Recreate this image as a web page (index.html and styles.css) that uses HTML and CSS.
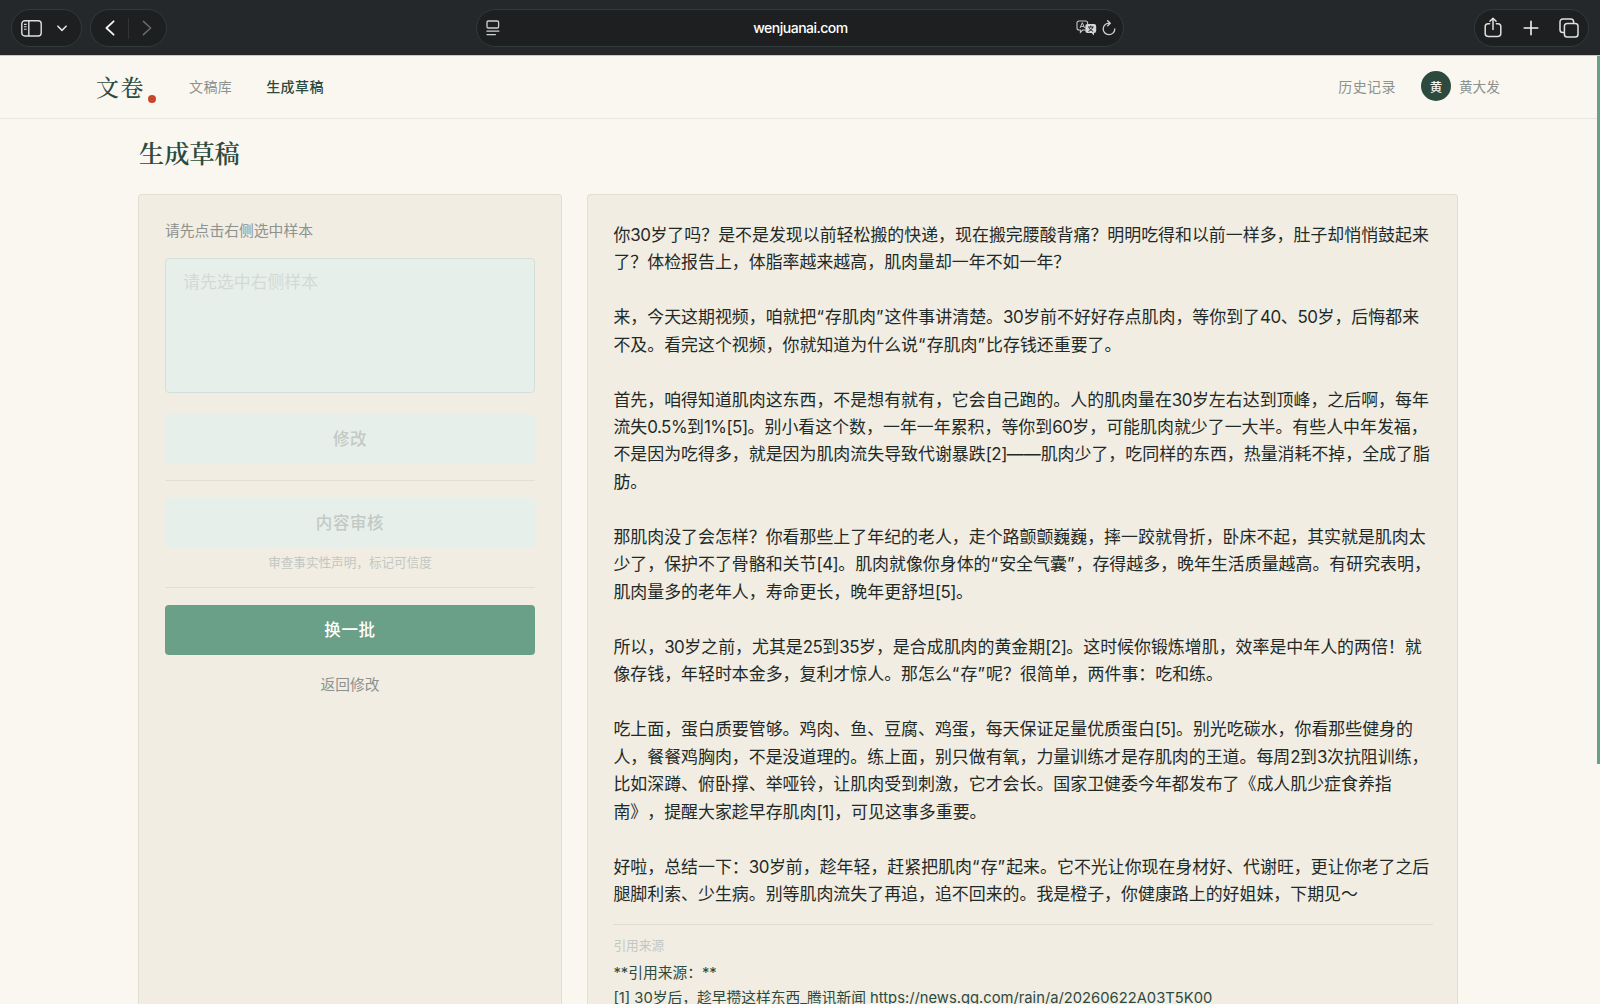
FILE: index.html
```html
<!DOCTYPE html>
<html lang="zh-CN">
<head>
<meta charset="utf-8">
<title>文卷 - 生成草稿</title>
<link rel="stylesheet" href="styles.css">
</head>
<body>
<div class="browser">
  <div class="pill pill-side">
    <svg width="21" height="17" viewBox="0 0 21 17" fill="none" stroke="#dfe1e1" stroke-width="1.4"><rect x=".8" y=".8" width="19.4" height="15.2" rx="3"/><path d="M7.8 1v15"/><path d="M3 4.4h2.6M3 6.8h2.6M3 9.2h2.6" stroke-width="1.1"/></svg>
    <svg width="10" height="7" viewBox="0 0 10 7" fill="none" stroke="#dfe1e1" stroke-width="1.6" stroke-linecap="round" stroke-linejoin="round"><path d="M.9 1.2 5 5.4l4.1-4.2"/></svg>
  </div>
  <div class="pill pill-nav">
    <svg width="10" height="16" viewBox="0 0 10 16" fill="none" stroke="#f2f3f3" stroke-width="1.8" stroke-linecap="round" stroke-linejoin="round"><path d="M8.6 1.3 1.4 8l7.2 6.7"/></svg>
    <span class="pill-divider"></span>
    <svg width="10" height="16" viewBox="0 0 10 16" fill="none" stroke="#66696a" stroke-width="1.6" stroke-linecap="round" stroke-linejoin="round"><path d="m1.4 1.3 7.2 6.7-7.2 6.7"/></svg>
  </div>
  <div class="pill pill-url">
    <svg width="14" height="16" viewBox="0 0 14 16" fill="none" stroke="#cfd1d1" stroke-width="1.3" stroke-linecap="round"><rect x="1" y="1" width="11.6" height="7" rx="1.2"/><path d="M1 11.2h11.8M1 14.6h8.4"/></svg>
    <span class="url">wenjuanai.com</span>
    <div class="url-tools">
      <svg width="21" height="16" viewBox="0 0 21 16" fill="none"><path d="M9.2 10H6.6L4.4 12.3V10H3A2 2 0 0 1 1 8V3a2 2 0 0 1 2-2h6.600a2 2 0 0 1 2 2v1" stroke="#c5c7c7" stroke-width="1.1"/><path d="M4 8 6.300 2.700 8.600 8M4.800 6.400h3" stroke="#c5c7c7"/><path d="M11.500 4h6.500a2.200 2.200 0 0 1 2.200 2.200v4.600A2.200 2.200 0 0 1 18 13v2.400L15.700 13h-4.200a2.200 2.200 0 0 1-2.200-2.200V6.200A2.200 2.200 0 0 1 11.500 4z" fill="#d6d8d8"/><path d="M12 7h5.600M14.800 5.600V7M16.700 7c-.5 2-2 3.500-4.300 4.400M13 7.500c.6 1.800 2 3 4.200 3.900" stroke="#1e1f20"/></svg>
      <svg width="14" height="16" viewBox="0 0 14 16" fill="none" stroke="#cfd1d1" stroke-width="1.3" stroke-linecap="round" stroke-linejoin="round"><path d="M7.600 3.100A5.800 5.800 0 1 0 12.800 9M5.600.8l2.700 2.400-2.600 2.600"/></svg>
    </div>
  </div>
  <div class="pill pill-actions">
    <svg width="18" height="21" viewBox="0 0 18 21" fill="none" stroke="#dfe1e1" stroke-width="1.5" stroke-linecap="round" stroke-linejoin="round"><path d="M5.600 6.800H4a2.800 2.800 0 0 0-2.800 2.800v7A2.800 2.800 0 0 0 4 19.400h10a2.800 2.800 0 0 0 2.800-2.800v-7A2.800 2.800 0 0 0 14 6.800h-1.600M9 12.500V1.400M5.900 4.300 9 1.200l3.100 3.100"/></svg>
    <svg width="16" height="16" viewBox="0 0 16 16" fill="none" stroke="#f2f3f3" stroke-width="1.6" stroke-linecap="round"><path d="M8 1.200v13.600M1.200 8h13.600"/></svg>
    <svg width="20" height="20" viewBox="0 0 20 20" fill="none" stroke="#dfe1e1" stroke-width="1.500"><rect x="5.400" y="5.400" width="13.600" height="13.600" rx="2.800"/><path d="M5.400 14.600H3.800A2.800 2.800 0 0 1 1 11.800v-8A2.800 2.800 0 0 1 3.800 1h8a2.800 2.800 0 0 1 2.800 2.800v1.600"/></svg>
  </div>
</div>
<header class="topbar">
  <div class="brand">文卷<span class="brand-dot"></span></div>
  <nav class="nav"><a class="nav-link">文稿库</a><a class="nav-link nav-link-active">生成草稿</a></nav>
  <div class="account"><a class="nav-link">历史记录</a><span class="avatar">黄</span><span class="user">黄大发</span></div>
</header>
<main class="page">
  <h1 class="title">生成草稿</h1>
  <div class="columns">
    <section class="card side">
      <p class="label">请先点击右侧选中样本</p>
      <div class="input">请先选中右侧样本</div>
      <button class="btn btn-off">修改</button>
      <div class="rule rule-first"></div>
      <button class="btn btn-off">内容审核</button>
      <p class="hint">审查事实性声明，标记可信度</p>
      <div class="rule rule-second"></div>
      <button class="btn btn-main">换一批</button>
      <a class="back">返回修改</a>
    </section>
    <section class="card article">
      <p class="para">你<span class="n">30</span>岁了吗？是不是发现以前轻松搬的快递，现在搬完腰酸背痛？明明吃得和以前一样多，肚子却悄悄鼓起来<br>了？体检报告上，体脂率越来越高，肌肉量却一年不如一年？</p>
      <p class="para">来，今天这期视频，咱就把<span class="q">“</span>存肌肉<span class="q">”</span>这件事讲清楚。<span class="n">30</span>岁前不好好存点肌肉，等你到了<span class="n">40</span>、<span class="n">50</span>岁，后悔都来<br>不及。看完这个视频，你就知道为什么说<span class="q">“</span>存肌肉<span class="q">”</span>比存钱还重要了。</p>
      <p class="para">首先，咱得知道肌肉这东西，不是想有就有，它会自己跑的。人的肌肉量在<span class="n">30</span>岁左右达到顶峰，之后啊，每年<br>流失<span class="n">0.5%</span>到<span class="n">1%[5]</span>。别小看这个数，一年一年累积，等你到<span class="n">60</span>岁，可能肌肉就少了一大半。有些人中年发福，<br>不是因为吃得多，就是因为肌肉流失导致代谢暴跌<span class="n">[2]</span>——肌肉少了，吃同样的东西，热量消耗不掉，全成了脂<br>肪。</p>
      <p class="para">那肌肉没了会怎样？你看那些上了年纪的老人，走个路颤颤巍巍，摔一跤就骨折，卧床不起，其实就是肌肉太<br>少了，保护不了骨骼和关节<span class="n">[4]</span>。肌肉就像你身体的<span class="q">“</span>安全气囊<span class="q">”</span>，存得越多，晚年生活质量越高。有研究表明，<br>肌肉量多的老年人，寿命更长，晚年更舒坦<span class="n">[5]</span>。</p>
      <p class="para">所以，<span class="n">30</span>岁之前，尤其是<span class="n">25</span>到<span class="n">35</span>岁，是合成肌肉的黄金期<span class="n">[2]</span>。这时候你锻炼增肌，效率是中年人的两倍！就<br>像存钱，年轻时本金多，复利才惊人。那怎么<span class="q">“</span>存<span class="q">”</span>呢？很简单，两件事：吃和练。</p>
      <p class="para">吃上面，蛋白质要管够。鸡肉、鱼、豆腐、鸡蛋，每天保证足量优质蛋白<span class="n">[5]</span>。别光吃碳水，你看那些健身的<br>人，餐餐鸡胸肉，不是没道理的。练上面，别只做有氧，力量训练才是存肌肉的王道。每周<span class="n">2</span>到<span class="n">3</span>次抗阻训练，<br>比如深蹲、俯卧撑、举哑铃，让肌肉受到刺激，它才会长。国家卫健委今年都发布了《成人肌少症食养指<br>南》，提醒大家趁早存肌肉<span class="n">[1]</span>，可见这事多重要。</p>
      <p class="para">好啦，总结一下：<span class="n">30</span>岁前，趁年轻，赶紧把肌肉<span class="q">“</span>存<span class="q">”</span>起来。它不光让你现在身材好、代谢旺，更让你老了之后<br>腿脚利索、少生病。别等肌肉流失了再追，追不回来的。我是橙子，你健康路上的好姐妹，下期见～</p>
      <div class="sources">
        <p class="sources-label">引用来源</p>
        <p class="source">**引用来源：**</p>
        <p class="source">[1] 30岁后，趁早攒这样东西_腾讯新闻 https://news.qq.com/rain/a/20260622A03T5K00</p>
      </div>
    </section>
  </div>
</main>
<div class="scrollbar"></div>
</body>
</html>
```
FILE: styles.css
```css
* { box-sizing: border-box; }
html, body { height: 100%; overflow: hidden; }
body {
  margin: 0;
  display: flex;
  flex-direction: column;
  background: #faf7f0;
  color: #1f2a28;
  font-family: Inter, "Noto Sans CJK SC", sans-serif;
  text-spacing-trim: space-all;
}
p, h1 { margin: 0; }

.browser {
  flex: none;
  height: 56px;
  padding: 9px 11px 9px;
  display: flex;
  align-items: flex-start;
  background: #24282b;
  border-bottom: 1px solid #c9c9c5;
}
.pill {
  height: 38px;
  display: flex;
  align-items: center;
  background: #1e1f20;
  border: 1px solid #32393b;
  border-radius: 19px;
}
.pill-side { width: 71px; padding-left: 9px; gap: 15px; }
.pill-nav { width: 77px; margin-left: 8px; padding: 0 14px; justify-content: space-between; }
.pill-divider { width: 1px; height: 21px; background: #303435; }
.pill-url { width: 648px; margin-left: 309px; padding: 0 7px 0 9px; justify-content: space-between; }
.url { font-size: 14px; font-weight: 500; color: #fff; margin-left: 25px; padding-bottom: 1px; letter-spacing: -0.5px; }
.url-tools { display: flex; align-items: center; gap: 5px; }
.pill-actions { width: 115px; margin-left: auto; padding: 0 9px 1px 9px; justify-content: space-between; }

.topbar {
  flex: none;
  height: 63px;
  padding: 0 100px 2px 96px;
  display: flex;
  align-items: center;
  border-bottom: 1px solid #e9e6e0;
}
.brand {
  display: flex;
  align-items: center;
  font-family: "Noto Serif CJK SC", "Songti SC", "Noto Sans CJK SC", serif;
  font-size: 23px;
  font-weight: 500;
  letter-spacing: 1.5px;
  color: #2d4a3e;
}
.brand-dot { width: 8px; height: 8px; margin: 26px 0 0 3px; border-radius: 50%; background: #c8472c; }
.nav { display: flex; gap: 34px; margin-left: 33px; }
.nav-link { font-size: 14px; letter-spacing: 0.4px; color: #8d928e; }
.nav-link-active { color: #2d4a3e; font-weight: 500; }
.account { margin-left: auto; display: flex; align-items: center; }
.avatar {
  width: 30px;
  height: 30px;
  margin: 0 8px 0 25px;
  display: grid;
  place-items: center;
  border-radius: 50%;
  background: #2d4a3e;
  color: #faf6ef;
  font-size: 12.500px;
  font-weight: 500;
}
.user { font-size: 13.700px; color: #8d928e; }

.page { flex: 1; min-height: 0; padding: 13px 142px 0 138px; display: flex; flex-direction: column; }
.title {
  font-family: "Noto Serif CJK SC", "Songti SC", "Noto Sans CJK SC", serif;
  font-size: 25.200px;
  line-height: 40px;
  font-weight: 600;
  color: #2d4a3e;
  padding-left: 1px;
}
.columns { flex: 1; min-height: 0; margin-top: 22px; display: grid; grid-template-columns: 424px 871px; gap: 25px; }
.card { background: #f1ede2; border: 1px solid #e2ded2; border-radius: 4px 4px 0 0; border-bottom: 0; height: 100%; }

.side { padding: 24px 26px 0; display: flex; flex-direction: column; }
.label { font-size: 14.800px; line-height: 24px; color: #8d928e; }
.input {
  height: 135px;
  margin-top: 15px;
  padding: 11px 17px;
  background: #e7efeb;
  border: 1px solid #d2e0d9;
  border-radius: 4px;
  font-size: 16.900px;
  line-height: 24px;
  color: #d3dad6;
}
.btn {
  height: 50px;
  padding: 0;
  border: 0;
  border-radius: 4px;
  font: 500 16.500px/50px Inter, "Noto Sans CJK SC", sans-serif;
  letter-spacing: 0.6px;
}
.btn-off { background: #e7efeb; color: #c3c9c5; }
.input + .btn { margin-top: 21px; }
.btn-main { background: #6a9f88; color: #fff; }
.rule { height: 1px; background: #e4dfd4; }
.rule-first { margin: 16px 0 17px; }
.hint { margin-top: 5px; font-size: 12.600px; line-height: 20px; text-align: center; color: #c3c7c2; }
.rule-second { margin: 14px 0 17px; }
.back { margin-top: 18px; font-size: 14.700px; line-height: 24px; text-align: center; color: #8d928e; }

.article { padding: 26.600px 0 0 25.400px; overflow: hidden; }
.para { font-size: 16.930px; line-height: 27.490px; margin-bottom: 27.490px; white-space: nowrap; }
.n { letter-spacing: -0.5px; }
.q { letter-spacing: 1.200px; }
.sources { width: 820px; margin-top: -12.500px; padding-top: 10px; border-top: 1px solid #e0dcd1; color: #2d4a3e; white-space: nowrap; }
.sources-label { font-size: 12.700px; line-height: 22px; color: #c3c7c2; }
.source { font-size: 14.750px; line-height: 25.700px; }
.source:nth-child(2) { margin-top: 4px; }

.scrollbar { position: absolute; top: 56px; right: 0; width: 3px; height: 708px; background: #6a9f88; }
```
